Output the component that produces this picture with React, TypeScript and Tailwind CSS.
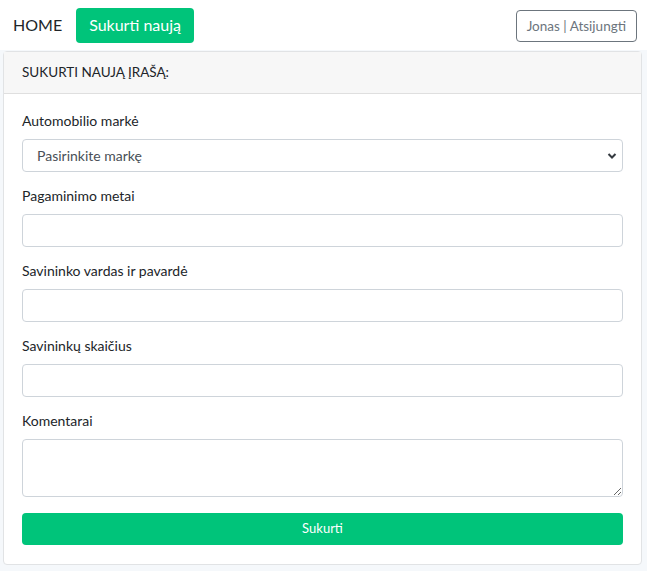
import React from "react";

function Field({ label, children }: { label: string; children: React.ReactNode }) {
  return (
    <div className="flex flex-col">
      <label className="text-[14px] leading-[18px] text-[#212529] mb-[9px]">{label}</label>
      {children}
    </div>
  );
}

export default function App() {
  const inputCls =
    "w-full h-[33px] rounded-[4px] border border-[#ced4da] bg-white px-[14px] text-[14px] text-[#495057] outline-none";
  return (
    <div className="min-h-[571px] bg-[#f5f8fb]" style={{ fontFamily: "Lato, 'Noto Sans', sans-serif" }}>
      <nav className="h-[50px] bg-white flex items-center justify-between pl-[13px] pr-[10px]">
        <div className="flex items-center gap-[14px]">
          <span className="text-[16px] text-[#212529] leading-none">HOME</span>
          <button className="h-[35px] px-[13px] rounded-[4px] bg-[#00c47a] text-white text-[16px]">Sukurti naują</button>
        </div>
        <button className="h-[32px] mt-[2px] px-[10px] rounded-[4px] border border-[#6c757d] text-[#6c757d] text-[13.5px]">
          Jonas | Atsijungti
        </button>
      </nav>
      <div className="ml-[3px] mr-[5px] mt-[1px] border border-[#e1e3e5] rounded-[4px] bg-white">
        <div className="h-[42px] bg-[#f7f7f7] border-b border-[#dfdfdf] flex items-center px-[18px] text-[13.5px] text-[#212529]">
          SUKURTI NAUJĄ ĮRAŠĄ:
        </div>
        <div className="px-[18px] pt-[18px] pb-[19px] flex flex-col gap-[15px]">
          <Field label="Automobilio markė">
            <div className="relative">
              <select className={inputCls + " appearance-none"} defaultValue="">
                <option value="">Pasirinkite markę</option>
              </select>
              <svg className="absolute right-[6px] top-[13px]" width="10" height="8" viewBox="0 0 10 8">
                <path d="M1.5 2 L5 5.5 L8.5 2" stroke="#343a40" strokeWidth="2" fill="none" />
              </svg>
            </div>
          </Field>
          <Field label="Pagaminimo metai">
            <input className={inputCls} />
          </Field>
          <Field label="Savininko vardas ir pavardė">
            <input className={inputCls} />
          </Field>
          <Field label="Savininkų skaičius">
            <input className={inputCls} />
          </Field>
          <div className="flex flex-col">
            <label className="text-[14px] leading-[18px] text-[#212529] mb-[9px]">Komentarai</label>
            <textarea className="w-full h-[58px] rounded-[4px] border border-[#ced4da] bg-white px-[14px] text-[14px] outline-none block" />
            <button className="mt-[16px] h-[32px] w-full rounded-[4px] bg-[#00c47a] text-white text-[13px]">Sukurti</button>
          </div>
        </div>
      </div>
    </div>
  );
}
